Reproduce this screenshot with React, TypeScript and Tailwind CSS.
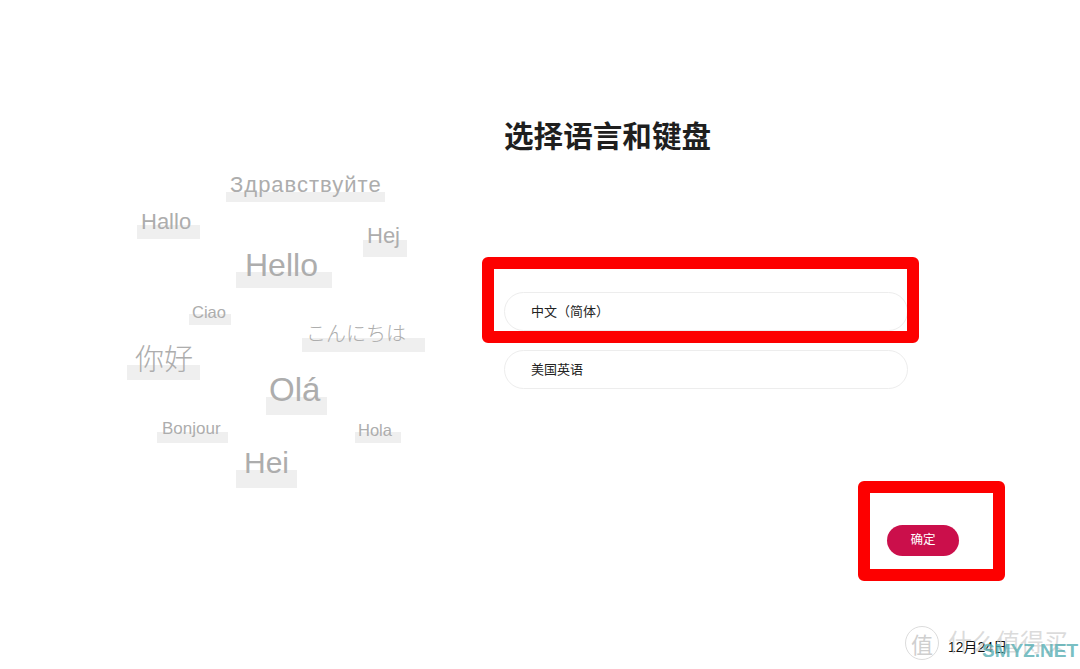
import React from 'react';

type Word = {
  text: string;
  x: number;
  y: number;
  size: number;
  cjk?: boolean;
  track?: number;
  band: [number, number, number, number];
};

// canvas items: text position + the grey band under each word
const WORDS: Word[] = [
  { text: 'Здравствуйте', x: 230, y: 174, size: 22, track: 1, band: [226, 192, 159, 10] },
  { text: 'Hallo', x: 141, y: 211, size: 22, band: [137, 225, 63, 14] },
  { text: 'Hej', x: 367, y: 225, size: 22, band: [363, 240, 44, 17] },
  { text: 'Hello', x: 245, y: 249, size: 32, band: [236, 272, 96, 16] },
  { text: 'Ciao', x: 192, y: 304, size: 16.5, band: [189, 314, 42, 11] },
  { text: 'こんにちは', x: 306, y: 323, size: 20, cjk: true, band: [302, 338, 123, 14] },
  { text: '你好', x: 135, y: 343, size: 29, cjk: true, band: [127, 365, 73, 15] },
  { text: 'Olá', x: 269, y: 373, size: 33, band: [266, 397, 61, 18] },
  { text: 'Bonjour', x: 162, y: 420, size: 17, band: [157, 432, 71, 11] },
  { text: 'Hola', x: 358, y: 422, size: 16.5, band: [355, 432, 46, 11] },
  { text: 'Hei', x: 244, y: 448, size: 30, band: [236, 470, 61, 18] },
];

const WordCloud: React.FC = () => (
  <div className="relative w-[504px] h-full shrink-0">
    {WORDS.map((w) => (
      <React.Fragment key={w.text}>
        <div
          className="absolute bg-[#efefef]"
          style={{ left: w.band[0], top: w.band[1], width: w.band[2], height: w.band[3] }}
        />
        <span
          className={`absolute leading-none whitespace-nowrap text-[#adadad] ${
            w.cjk ? "font-['Noto_Sans_CJK_JP',sans-serif] font-light" : "font-['Liberation_Sans',sans-serif]"
          }`}
          style={{ left: w.x, top: w.y, fontSize: w.size, letterSpacing: w.track ?? 0 }}
        >
          {w.text}
        </span>
      </React.Fragment>
    ))}
  </div>
);

const LangOption: React.FC<{ label: string }> = ({ label }) => (
  <div className="h-[39px] flex items-center pl-[26px] rounded-full border border-[#ededed] text-[13px] text-[#222]">
    {label}
  </div>
);

// date in the corner with the site watermark stamped over it
const CornerStamp: React.FC = () => (
  <div className="absolute left-[905px] top-[626px] flex items-center gap-[5px]">
    <div className="w-[34px] h-[34px] rounded-full border border-[#dcdcdc] flex items-center justify-center text-[22px] text-[#cfcfcf] bg-white/70 font-['Noto_Sans_CJK_SC',sans-serif]">
      值
    </div>
    <div className="relative flex gap-[2px] h-[32px]">
      <div className="w-[78px] rounded-l-full bg-white/40" />
      <div className="w-[52px] rounded-r-full bg-white/40" />
      <span className="absolute left-[4px] top-[10px] text-[14px] leading-[20px] text-[#111] whitespace-nowrap">
        12月24日
      </span>
      <span className="absolute left-[4px] top-0 text-[24px] leading-[28px] text-[#cccccc]/70 whitespace-nowrap font-['Noto_Sans_CJK_SC',sans-serif]">
        什么值得买
      </span>
      <span className="absolute left-[38px] top-[13px] text-[19px] leading-[22px] font-bold text-[#55aeb3]/80 whitespace-nowrap">
        SMYZ.NET
      </span>
    </div>
  </div>
);

const App: React.FC = () => {
  return (
    <div className="relative flex w-full h-[669px] bg-white overflow-hidden font-['Liberation_Sans','Noto_Sans_CJK_SC',sans-serif]">
      <WordCloud />

      <div className="flex flex-col w-[455px] pt-[120px]">
        <h1 className="text-[29.6px] leading-[29px] font-bold text-[#1f1f1f] font-['Noto_Sans_CJK_SC',sans-serif]">
          选择语言和键盘
        </h1>

        <div className="mt-[143px] flex flex-col gap-[19px] w-[404px]">
          <LangOption label="中文（简体）" />
          <LangOption label="美国英语" />
        </div>

        <button className="self-end mt-[136px] w-[72px] h-[31px] rounded-full bg-[#cb0f4b] text-white text-[12.5px] flex items-center justify-center">
          确定
        </button>
      </div>

      {/* red annotation frames */}
      <div className="absolute left-[482px] top-[257px] w-[437px] h-[86px] border-[12px] border-[#fd0000] rounded-[6px]" />
      <div className="absolute left-[858px] top-[481px] w-[147px] h-[100px] border-[12px] border-[#fd0000] rounded-[6px]" />

      <CornerStamp />
    </div>
  );
};

export default App;
